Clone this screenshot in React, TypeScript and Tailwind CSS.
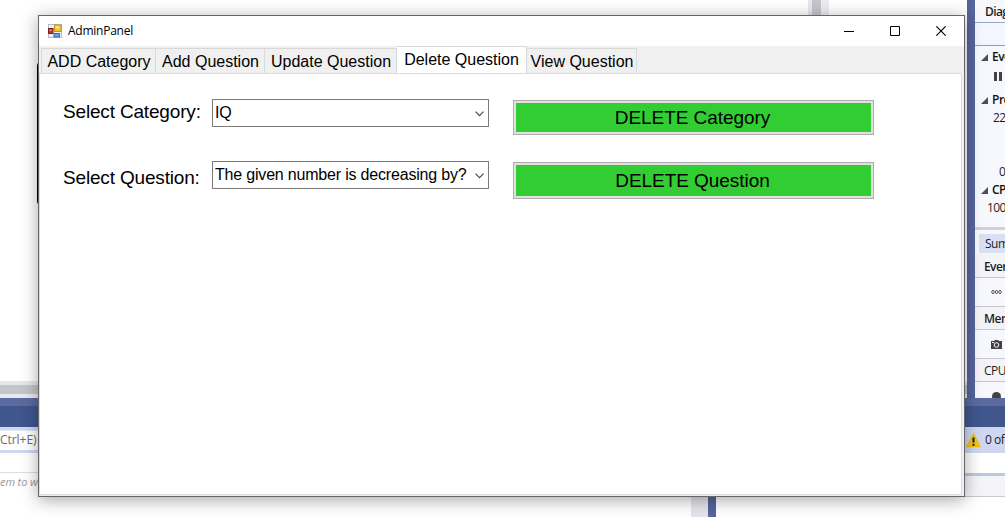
import React from "react";

const ui = "font-['Open_Sans','Noto_Sans',sans-serif]";

function FormIcon() {
  return (
    <svg width="14" height="14" viewBox="0 0 14 14" className="shrink-0">
      <rect x="0.5" y="0.5" width="13" height="13" fill="#eef1f7" stroke="#b4bccb" />
      <rect x="6.5" y="1" width="6.5" height="6.5" fill="#f4c430" stroke="#c2901c" />
      <rect x="7.5" y="2" width="4" height="2.5" fill="#fbe07a" />
      <rect x="0.5" y="4.5" width="4.5" height="5" fill="#b8382b" stroke="#7e2219" />
      <rect x="1.5" y="5.5" width="2" height="1.5" fill="#e88" />
      <rect x="6" y="9.5" width="5.5" height="3.5" fill="#6f9fe4" stroke="#3a69b4" />
    </svg>
  );
}

function Warning() {
  return (
    <svg width="15" height="15" viewBox="0 0 15 15" className="shrink-0">
      <path d="M7.5 1 L14 13.5 H1 Z" fill="#f7ca0a" stroke="#eebf18" strokeWidth="1.5" strokeLinejoin="round" />
      <path d="M6.5 4.5h2v5h-2zM6.5 10.7h2v2h-2z" fill="#1d1d1d" />
    </svg>
  );
}

function Section({ label, className }: { label: string; className: string }) {
  return (
    <div className={`flex items-center gap-1 pl-1.5 text-[12px] leading-[16px] font-semibold text-[#111] ${className}`}>
      <svg width="7" height="7" viewBox="0 0 7 7" className="shrink-0">
        <path d="M7 0V7H0Z" fill="#4d4d52" />
      </svg>
      <span className="tracking-[-0.5px] whitespace-nowrap">{label}</span>
    </div>
  );
}

function Diagnostics() {
  return (
    <aside className="flex h-[398px] w-[30px] shrink-0 flex-col overflow-hidden bg-[#f7f8fe] text-[12px] whitespace-nowrap text-[#1e1e1e]">
      <div className="h-[23px] shrink-0 border-b border-[#9aa7c4] pl-[10px] leading-[24px] font-semibold tracking-[-0.6px]">Diagnostics</div>
      <div className="h-[23px] shrink-0 border-b border-[#8f9dbd] bg-[#f3f6fe]" />
      <Section label="Events" className="mt-[3px] h-4 shrink-0" />
      <div className="mt-[7px] ml-[19px] flex h-[9px] shrink-0 gap-[2px]">
        <div className="w-[3px] bg-[#424242]" />
        <div className="w-[3px] bg-[#424242]" />
      </div>
      <Section label="Process" className="mt-[11px] h-4 shrink-0" />
      <div className="mt-[2px] ml-[18px] h-4 shrink-0 leading-4 tracking-[-0.6px]">22</div>
      <div className="mt-[38px] ml-[24px] h-4 shrink-0 leading-4">0</div>
      <Section label="CPU" className="mt-[2px] h-4 shrink-0" />
      <div className="mt-[2px] ml-[12px] h-4 shrink-0 leading-4 tracking-[-0.6px]">100</div>
      <div className="mt-[11px] h-[3px] shrink-0 bg-[#d2d2d6]" />
      <div className="mt-[4px] ml-1 h-[19px] shrink-0 bg-[#d9e0f3] pl-[6px] leading-[20px] tracking-[-0.5px]">Summary</div>
      <div className="mt-px h-[24px] shrink-0 border-b border-[#c6c8d2] bg-[#f4f4f8] pl-[9px] leading-[25px] font-semibold tracking-[-0.6px]">Events</div>
      <div className="flex h-[29px] shrink-0 items-center border-b border-[#c6c8d2] pl-[16px]">
        <svg width="11" height="6" viewBox="0 0 11 6" fill="none" stroke="#555" strokeWidth="1">
          <path d="M0.5 3 L2 1 L3.5 3 L2 5ZM4 3 L5.5 1 L7 3 L5.5 5ZM7.5 3 L9 1 L10.5 3 L9 5Z" />
        </svg>
      </div>
      <div className="h-[23px] shrink-0 border-b border-[#c6c8d2] bg-[#f4f4f8] pl-[9px] leading-[24px] font-semibold tracking-[-0.5px]">Memory</div>
      <div className="flex h-[29px] shrink-0 items-center border-b border-[#c6c8d2] pl-[16px]">
        <svg width="11" height="9" viewBox="0 0 11 9">
          <path d="M0 1H3L4 0H7L8 1H11V9H0Z" fill="#424242" />
          <circle cx="5.5" cy="5" r="2.3" fill="none" stroke="#f5f6fc" />
          <path d="M1 2h2v1H1z" fill="#f5f6fc" />
        </svg>
      </div>
      <div className="h-[23px] shrink-0 border-b border-[#c6c8d2] bg-[#f4f4f8] pl-[9px] leading-[24px] font-medium tracking-[-0.5px]">CPU</div>
      <div className="mt-[10px] ml-[17px] size-[9px] shrink-0 rounded-full bg-[#424242]" />
    </aside>
  );
}

function Backdrop() {
  return (
    <div className={`flex h-full w-full flex-col bg-white ${ui}`}>
      <div className="flex h-[398px] shrink-0">
        <div className="flex flex-1 flex-col">
          <div className="flex flex-1">
            <div className="flex w-[808px] items-start pt-[61px] pl-[37px]">
              <div className="h-[145px] w-10 rounded-[5px] border-2 border-black" />
            </div>
            <div className="w-[4px] bg-[#e8e8ec]" />
            <div className="w-[9px] bg-[#c5c5ca]" />
            <div className="w-[8px] bg-[#ececf1]" />
          </div>
          <div className="h-[4px] bg-[#e6e6eb]" />
          <div className="h-[9px] bg-[#c4c5c9]" />
          <div className="h-[4px] bg-[#e8eaf2]" />
        </div>
        <div className="w-[8px] bg-[#56659b]" />
        <Diagnostics />
      </div>
      <div className="h-[8px] shrink-0 bg-[#5b6a9f]" />
      <div className="h-[21px] shrink-0 bg-[#40568d]" />
      <div className="flex h-[26px] shrink-0 items-center justify-between bg-[#cfd8f0] text-[12px] text-[#1e1e1e]">
        <div className="mb-[1px] h-[20px] w-[60px] border-t border-[#e0e6f5] bg-white leading-[18px] tracking-[-0.05px] whitespace-nowrap text-[#6d6d6d]">Ctrl+E)</div>
        <div className="flex w-[39px] items-center gap-[4px] overflow-hidden tracking-[-0.5px] whitespace-nowrap">
          <Warning />
          <span className="shrink-0">0 of</span>
        </div>
      </div>
      <div className="flex h-[44px] shrink-0">
        <div className="flex w-[500px] flex-col">
          <div className="h-[20px] border-b border-[#dedee2]" />
          <div className="text-[11px] leading-[18px] tracking-[-0.1px] text-[#999] italic">em to w</div>
        </div>
        <div className="flex flex-1 flex-col">
          <div className="h-[20px]" />
          <div className="h-[3px] bg-[#bac9e2]" />
          <div className="flex-1 border-b border-[#c6c8d2] bg-[#f5f5f7]" />
        </div>
      </div>
      <div className="flex flex-1">
        <div className="w-[691px]" />
        <div className="w-[17px] bg-[#e4e4ea]" />
        <div className="w-[8px] bg-[#56659b]" />
      </div>
    </div>
  );
}

const tabBase = "flex shrink-0 justify-center border-[#d9d9d9] text-[16px] whitespace-nowrap";

function Tab({ label, className }: { label: string; className: string }) {
  return <div className={`${tabBase} h-[25px] border-t border-r bg-[#f0f0f0] pl-px leading-[25px] ${className}`}>{label}</div>;
}

function Combo({ value, className }: { value: string; className: string }) {
  return (
    <div className={`flex h-[28px] w-[277px] items-center justify-between border border-[#7a7a7a] bg-white pr-[4px] pl-[2px] text-[16px] leading-[24px] tracking-[-0.19px] whitespace-nowrap ${className}`}>
      <span className="mb-[1px]">{value}</span>
      <svg width="9" height="6" viewBox="0 0 9 6" fill="none" className="mt-[2px] shrink-0">
        <path d="M0.5 0.7L4.5 4.7L8.5 0.7" stroke="#444" strokeWidth="1.1" />
      </svg>
    </div>
  );
}

function Action({ label, className }: { label: string; className: string }) {
  return (
    <button className={`flex w-[361px] items-center justify-center border border-[#adadad] bg-[#e1e1e1] p-[2px] ${className}`}>
      <span className="flex h-full w-full items-center justify-center bg-[#32cd32] pr-[2px] text-[19px] leading-[24px] tracking-[-0.05px]">{label}</span>
    </button>
  );
}

function AdminWindow() {
  return (
    <div className="absolute top-[15px] left-[38px] flex h-[482px] w-[927px] flex-col border border-[#65656a] bg-[#f0f0f0] font-['Liberation_Sans',Arial,sans-serif] text-black shadow-[0_3px_16px_0px_rgba(0,0,0,0.35)]">
      <div className="flex h-[30px] shrink-0 items-center bg-white pl-[9px]">
        <FormIcon />
        <span className={`ml-[6px] text-[12px] tracking-[-0.25px] ${ui}`}>AdminPanel</span>
        <div className="mr-[18px] mb-[1px] ml-auto flex items-center gap-[36px]">
          <svg width="10" height="10" viewBox="0 0 10 10"><path d="M0 5.5H10" stroke="#000" /></svg>
          <svg width="10" height="10" viewBox="0 0 10 10"><path d="M0.5 0.5H9.5V9.5H0.5Z" fill="none" stroke="#000" /></svg>
          <svg width="10" height="10" viewBox="0 0 10 10"><path d="M0.3 0.3L9.7 9.7M9.7 0.3L0.3 9.7" stroke="#000" strokeWidth="1.1" /></svg>
        </div>
      </div>
      <div className="flex h-[27px] shrink-0 items-end pl-[2px]">
        <Tab label="ADD Category" className="w-[115px] border-l" />
        <Tab label="Add Question" className="w-[109px]" />
        <Tab label="Update Question" className="w-[132px]" />
        <div className={`${tabBase} h-[27px] w-[130px] border-t border-r bg-white leading-[26px]`}>Delete Question</div>
        <Tab label="View Question" className="w-[110px]" />
      </div>
      <div className="mr-[2px] mb-[1px] flex flex-1 items-start border border-[#dcdcdc] bg-white pl-[23px]">
        <div className="flex w-[149px] flex-col text-[19px] leading-[24px] tracking-[-0.17px] whitespace-nowrap">
          <div className="mt-[26px] h-[24px]">Select Category:</div>
          <div className="mt-[42px] h-[24px]">Select Question:</div>
        </div>
        <div className="mt-[25px] flex flex-col">
          <Combo value="IQ" className="" />
          <Combo value="The given number is decreasing by?" className="mt-[34px]" />
        </div>
        <div className="mt-[26px] ml-[24px] flex flex-col">
          <Action label="DELETE Category" className="h-[35px]" />
          <Action label="DELETE Question" className="mt-[27px] h-[37px]" />
        </div>
      </div>
    </div>
  );
}

export default function App() {
  return (
    <div className="relative h-[517px] w-[1005px] overflow-hidden bg-white">
      <Backdrop />
      <AdminWindow />
    </div>
  );
}
